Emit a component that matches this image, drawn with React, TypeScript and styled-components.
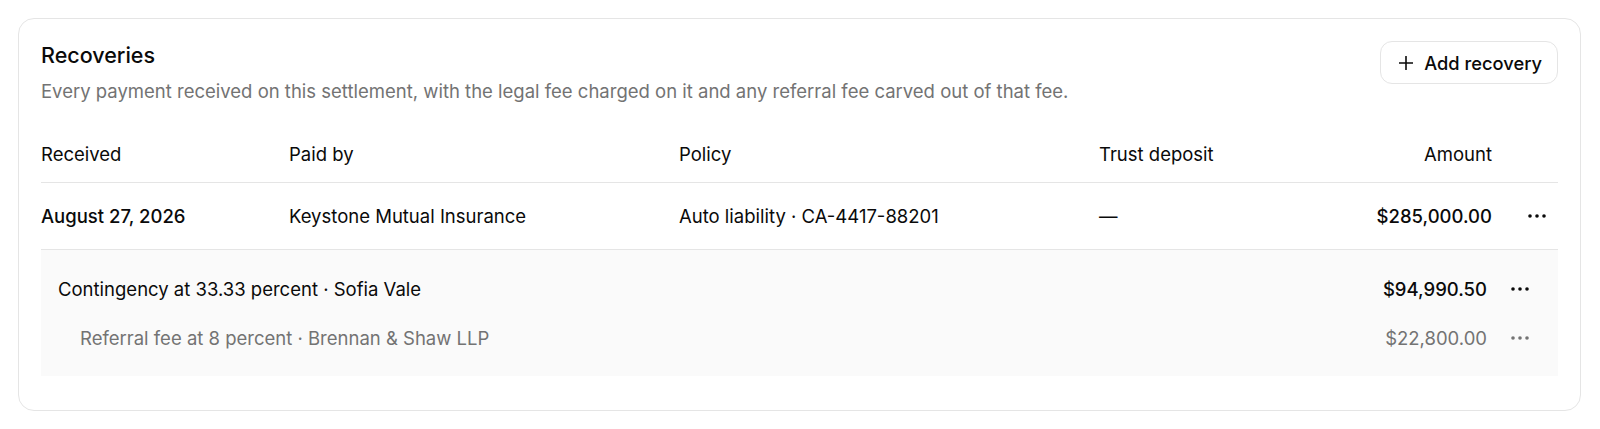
import styled, { createGlobalStyle } from "styled-components";

const GlobalStyle = createGlobalStyle`
  body {
    margin: 0;
    background: #ffffff;
    font-family: "Inter", "Noto Sans", sans-serif;
    color: #0a0a0a;
    -webkit-font-smoothing: antialiased;
  }
`;

const Page = styled.div`
  padding: 18px 19px 18px 18px;
`;

const Card = styled.section`
  border: 1px solid #e5e5e5;
  border-radius: 16px;
  padding: 21px 22px 34px 22px;
`;

const CardHeader = styled.header`
  display: flex;
  justify-content: space-between;
  align-items: flex-start;
`;

const TitleBlock = styled.div`
  display: flex;
  flex-direction: column;
  gap: 8px;
`;

const Title = styled.h2`
  margin: 0;
  font-size: 21.5px;
  line-height: 30px;
  font-weight: 500;
  color: #0a0a0a;
`;

const Subtitle = styled.p`
  margin: 0;
  font-size: 18.5px;
  line-height: 26px;
  color: #737373;
`;

const AddButton = styled.button`
  display: flex;
  align-items: center;
  gap: 11px;
  height: 43px;
  margin-top: 1px;
  padding: 0 15px 0 18px;
  border: 1px solid #e5e5e5;
  border-radius: 12px;
  background: #ffffff;
  font-family: inherit;
  font-size: 18.3px;
  font-weight: 500;
  color: #0a0a0a;
  cursor: pointer;
`;

const columns = "248px 390px 420px 200px 193px 66px";

const HeadRow = styled.div`
  display: grid;
  grid-template-columns: ${columns};
  margin-top: 37px;
  padding-bottom: 15px;
  border-bottom: 1px solid #e5e5e5;
  font-size: 18.5px;
  line-height: 26px;
  font-weight: 500;
`;

const BodyRow = styled.div`
  display: grid;
  grid-template-columns: ${columns};
  align-items: center;
  height: 66px;
  border-bottom: 1px solid #e5e5e5;
  font-size: 18.5px;
  line-height: 26px;
`;

const Cell = styled.div<{ $align?: "right"; $strong?: boolean }>`
  text-align: ${(p) => p.$align ?? "left"};
  font-weight: ${(p) => (p.$strong ? 500 : 400)};
  white-space: nowrap;
`;

const ActionCell = styled.div`
  display: flex;
  justify-content: flex-end;
  padding-right: 5px;
`;

const DotsButton = styled.button<{ $muted?: boolean }>`
  display: flex;
  align-items: center;
  justify-content: center;
  width: 32px;
  height: 28px;
  padding: 0;
  border: 0;
  background: transparent;
  color: ${(p) => (p.$muted ? "#737373" : "#0a0a0a")};
  cursor: pointer;
`;

const FeeBox = styled.div`
  background: #fafafa;
  padding: 14px 17px 14px;
`;

const FeeRow = styled.div<{ $level: number }>`
  display: grid;
  grid-template-columns: 1fr auto 54px;
  align-items: center;
  height: 49px;
  padding-left: ${(p) => p.$level * 22}px;
  font-size: 18.5px;
  line-height: 26px;
  color: ${(p) => (p.$level > 0 ? "#737373" : "#0a0a0a")};
`;

const FeeAmount = styled.div<{ $strong?: boolean }>`
  text-align: right;
  font-weight: ${(p) => (p.$strong ? 500 : 400)};
`;

const PlusIcon = () => (
  <svg width="14" height="14" viewBox="0 0 14 14" fill="none">
    <path d="M7 0.5v13M0.5 7h13" stroke="currentColor" strokeWidth="1.6" strokeLinecap="round" />
  </svg>
);

const DotsIcon = () => (
  <svg width="18" height="4" viewBox="0 0 18 4" fill="currentColor">
    <circle cx="2" cy="2" r="1.8" />
    <circle cx="9" cy="2" r="1.8" />
    <circle cx="16" cy="2" r="1.8" />
  </svg>
);

const fees = [
  { label: "Contingency at 33.33 percent · Sofia Vale", amount: "$94,990.50", level: 0 },
  { label: "Referral fee at 8 percent · Brennan & Shaw LLP", amount: "$22,800.00", level: 1 },
];

export default function App() {
  return (
    <Page>
      <GlobalStyle />
      <Card>
        <CardHeader>
          <TitleBlock>
            <Title>Recoveries</Title>
            <Subtitle>
              Every payment received on this settlement, with the legal fee charged on it and any
              referral fee carved out of that fee.
            </Subtitle>
          </TitleBlock>
          <AddButton>
            <PlusIcon />
            Add recovery
          </AddButton>
        </CardHeader>

        <HeadRow>
          <Cell>Received</Cell>
          <Cell>Paid by</Cell>
          <Cell>Policy</Cell>
          <Cell>Trust deposit</Cell>
          <Cell $align="right">Amount</Cell>
          <div />
        </HeadRow>

        <BodyRow>
          <Cell $strong>August 27, 2026</Cell>
          <Cell>Keystone Mutual Insurance</Cell>
          <Cell>Auto liability · CA-4417-88201</Cell>
          <Cell>—</Cell>
          <Cell $align="right" $strong>
            $285,000.00
          </Cell>
          <ActionCell>
            <DotsButton aria-label="Recovery actions">
              <DotsIcon />
            </DotsButton>
          </ActionCell>
        </BodyRow>

        <FeeBox>
          {fees.map((fee) => (
            <FeeRow key={fee.label} $level={fee.level}>
              <div>{fee.label}</div>
              <FeeAmount $strong={fee.level === 0}>{fee.amount}</FeeAmount>
              <ActionCell>
                <DotsButton $muted={fee.level > 0} aria-label="Fee actions">
                  <DotsIcon />
                </DotsButton>
              </ActionCell>
            </FeeRow>
          ))}
        </FeeBox>
      </Card>
    </Page>
  );
}
